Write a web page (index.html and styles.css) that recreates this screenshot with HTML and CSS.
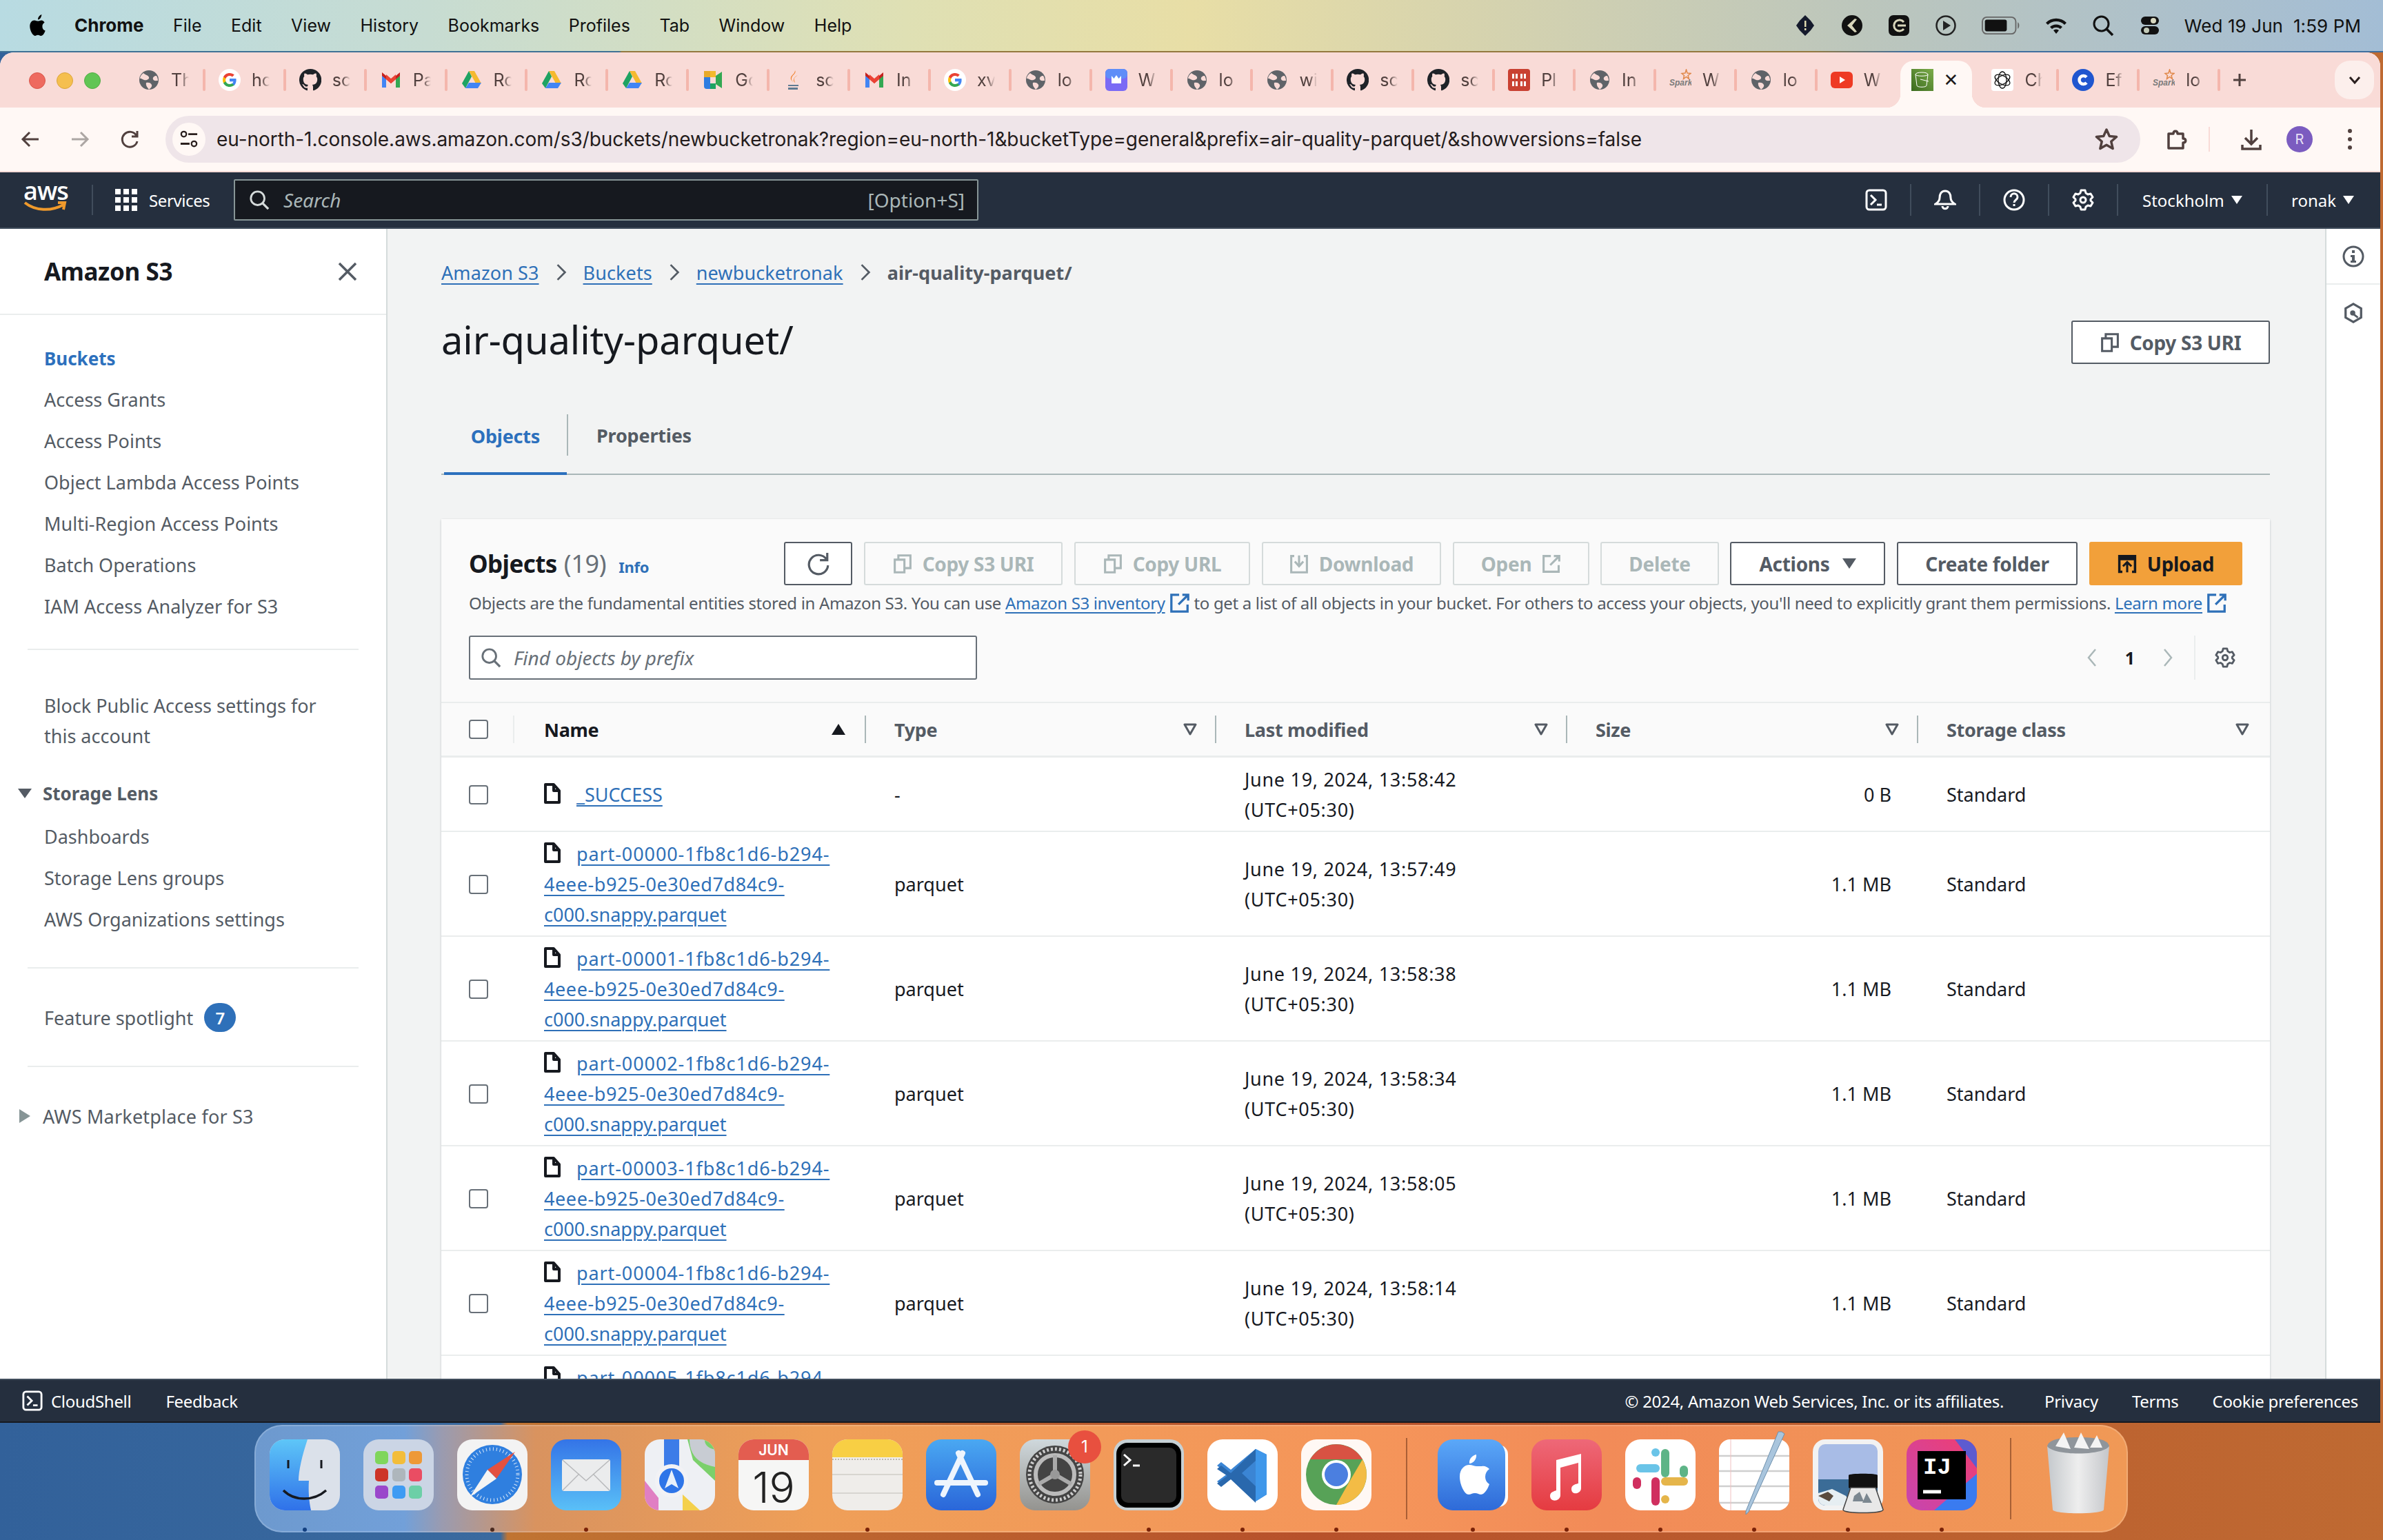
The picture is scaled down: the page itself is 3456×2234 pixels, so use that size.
FILE: index.html
```html
<!DOCTYPE html>
<html lang="en">
<head>
<meta charset="utf-8">
<title>air-quality-parquet/ - S3 bucket</title>
<link rel="stylesheet" href="styles.css">
</head>
<body>
<svg class="defs" width="0" height="0">
  <defs>
    <symbol id="globe" viewBox="0 0 32 32"><circle cx="16" cy="16" r="14" fill="#5f6368"/><path d="M8 6c3 3 7 3 8 6s-4 5-7 4-5-3-6-2c0-3 2-6 5-8zM27 10c-3 0-6 2-5 5s5 2 7 2c0-3-1-5-2-7zM12 20c3-1 7 0 8 3s-2 5-4 7c-2-3-5-6-4-10z" fill="#fadbd7"/></symbol>
    <symbol id="goog" viewBox="0 0 32 32"><circle cx="16" cy="16" r="16" fill="#fff"/><path d="M25.6 16.3c0-.8-.1-1.500-.2-2.200H16v4.100h5.400c-.2 1.300-1 2.400-2 3.100v2.600h3.300c1.900-1.800 2.900-4.400 2.900-7.600z" fill="#4285f4"/><path d="M16 26c2.700 0 5-.9 6.700-2.400l-3.300-2.600c-.9.600-2 1-3.400 1-2.600 0-4.800-1.800-5.600-4.100H7v2.600C8.600 23.800 12 26 16 26z" fill="#34a853"/><path d="M10.400 17.900c-.4-1.200-.4-2.600 0-3.800v-2.600H7c-1.300 2.800-1.300 6.200 0 9z" fill="#fbbc05"/><path d="M16 10c1.500 0 2.800.5 3.900 1.500l2.900-2.900C21 6.900 18.700 6 16 6c-4 0-7.400 2.200-9 5.500l3.400 2.600C11.200 11.800 13.400 10 16 10z" fill="#ea4335"/></symbol>
    <symbol id="gh" viewBox="0 0 16 16"><path fill="#1f2328" d="M8 0a8 8 0 0 0-2.500 15.600c.4.100.5-.2.500-.4v-1.400c-2.200.5-2.700-1-2.700-1-.4-.9-.9-1.200-.9-1.200-.7-.5.100-.5.100-.5.800.1 1.200.8 1.200.8.700 1.200 1.900.9 2.300.7.100-.5.300-.9.500-1.100-1.800-.2-3.600-.9-3.600-4 0-.9.300-1.600.8-2.100-.1-.2-.4-1 .1-2.100 0 0 .7-.2 2.200.8a7.600 7.600 0 0 1 4 0c1.500-1 2.200-.8 2.200-.8.500 1.100.2 1.900.1 2.100.5.600.8 1.300.8 2.100 0 3.100-1.900 3.800-3.700 4 .3.300.6.800.6 1.500v2.200c0 .2.100.5.600.4A8 8 0 0 0 8 0z"/></symbol>
    <symbol id="gmail" viewBox="0 0 32 32"><path d="M3 8v19h6V15z" fill="#4285f4"/><path d="M23 15v12h6V8z" fill="#34a853"/><path d="M3 8l13 11L29 8l-6 7-7 6-7-6z" fill="#ea4335"/><path d="M3 5l6 5v5L3 10zM29 5l-6 5v5l6-5z" fill="#c5221f"/><path d="M9 8l7 6 7-6v7l-7 6-7-6z" fill="#ea4335"/></symbol>
    <symbol id="drive" viewBox="0 0 32 32"><path d="M12 3h8l10 18h-8z" fill="#f5b92e"/><path d="M12 3l4 8-9 17-5-7z" fill="#1ea362"/><path d="M7 28l5-8h18l-5 8z" fill="#4285f4"/></symbol>
    <symbol id="meet" viewBox="0 0 32 32"><path d="M3 3h17v9H12v9H3z" fill="#f5b92e"/><path d="M3 12h9v17H7a4 4 0 0 1-4-4z" fill="#2f7de1"/><path d="M12 21h8v8h-8z" fill="#1ea362"/><path d="M20 10l9-6v24l-9-6z" fill="#34a853"/><path d="M3 3h9v9H3z" fill="#e7a92a"/></symbol>
    <symbol id="java" viewBox="0 0 32 32"><path d="M18 2c3 5-6 7-5 13 0 2 2 3 2 4-3-3-5-6-1-10 2-2 4-4 4-7zM22 9c-4 3-6 4-5 8 0 1 1 2 1 3-2-2-3-4-1-7 1-2 3-3 5-4z" fill="#f0812d"/><path d="M8 23h15v2H8zM8 27h14v3H8z" fill="#5f7a92"/></symbol>
    <symbol id="crown" viewBox="0 0 32 32"><rect width="32" height="32" rx="6" fill="#7a6af5"/><rect width="32" height="14" rx="6" fill="#5f8df8"/><path d="M9 10l3.500 4L16 9l3.500 5L23 10v11H9z" fill="#fff"/></symbol>
    <symbol id="redgrid" viewBox="0 0 32 32"><rect width="32" height="32" rx="4" fill="#c94132"/><path d="M6 7h8v7H6zM18 7h8v7h-8zM6 18h8v7H6zM18 18h8v7h-8z" fill="#fff"/><path d="M10 7v7M22 7v7M10 18v7M22 18v7" stroke="#c94132" stroke-width="2"/></symbol>
    <symbol id="spark" viewBox="0 0 32 32"><path d="M23 6l1.500-5 1.500 5 5 .5-4 3 1.500 5-4-3-4 3 1-5-3.500-3z" fill="none" stroke="#e0884a" stroke-width="1.500"/><text x="0" y="24" font-family="Liberation Sans" font-style="italic" font-weight="700" font-size="12" fill="#7b7b7b">Spark</text></symbol>
    <symbol id="yt" viewBox="0 0 32 32"><rect y="4" width="32" height="24" rx="6" fill="#ee3a24"/><path d="M13 11l8 5-8 5z" fill="#fff"/></symbol>
    <symbol id="s3" viewBox="0 0 32 32"><defs><linearGradient id="s3g" x1="0" y1="1" x2="1" y2="0"><stop offset="0" stop-color="#3a6a1e"/><stop offset="1" stop-color="#7cac4a"/></linearGradient></defs><rect width="32" height="32" fill="url(#s3g)"/><path d="M6 8c0-4 18-4 18 0l-2 16c0 3-14 3-14 0zM6 8c0 3 18 3 18 0M13 15l12 3" fill="none" stroke="#fff" stroke-width="1"/></symbol>
    <symbol id="openai" viewBox="0 0 32 32"><rect width="32" height="32" rx="4" fill="#fff"/><g fill="none" stroke="#111" stroke-width="1.300"><ellipse cx="16" cy="16" rx="6" ry="12"/><ellipse cx="16" cy="16" rx="6" ry="12" transform="rotate(60 16 16)"/><ellipse cx="16" cy="16" rx="6" ry="12" transform="rotate(120 16 16)"/></g></symbol>
    <symbol id="coursera" viewBox="0 0 32 32"><circle cx="16" cy="16" r="16" fill="#2056cf"/><path d="M21 12a6 6 0 1 0 0 8" fill="none" stroke="#fff" stroke-width="4.500"/></symbol>

    <symbol id="i-file" viewBox="0 0 24 30"><path d="M2 2h12l8 9v17H2zM14 2v9h8" fill="none" stroke="#16191f" stroke-width="4" stroke-linejoin="round"/></symbol>
    <symbol id="i-copy" viewBox="0 0 32 32"><path d="M3 9h16v21H3zM9 9V2h20v21h-10" fill="none" stroke="currentColor" stroke-width="3.500"/></symbol>
    <symbol id="i-ext" viewBox="0 0 32 32"><path d="M28 18v11H3V3h12M20 3h9v9M29 3L14 18" fill="none" stroke="currentColor" stroke-width="3.500"/></symbol>
    <symbol id="i-gear" viewBox="0 0 32 32"><path d="M13 2h6l1 4 3 2 4-1 3 5-3 3v2l3 3-3 5-4-1-3 2-1 4h-6l-1-4-3-2-4 1-3-5 3-3v-2l-3-3 3-5 4 1 3-2z" fill="none" stroke="currentColor" stroke-width="3" stroke-linejoin="round"/><circle cx="16" cy="16" r="4" fill="none" stroke="currentColor" stroke-width="3"/></symbol>
    <symbol id="i-search" viewBox="0 0 32 32"><circle cx="13.500" cy="13.500" r="10.500" fill="none" stroke="currentColor" stroke-width="3"/><path d="M21 21l9 9" stroke="currentColor" stroke-width="3.500"/></symbol>
    <symbol id="i-filter" viewBox="0 0 20 18"><path d="M2 2h16l-8 14z" fill="none" stroke="currentColor" stroke-width="3" stroke-linejoin="round"/></symbol>
  </defs>
</svg>

<header class="menubar">
  <div class="menu-left">
    <svg class="apple" viewBox="0 0 24 30"><path d="M17 8c-2 0-3 1-5 1S9 8 7 8c-3 0-6 3-6 8 0 6 4 13 7 13 2 0 2-1 4-1s2 1 4 1c3 0 5-4 6-7-3-1-4-3-4-6 0-2 1-4 3-5-1-2-3-3-4-3zM12 7c0-3 2-6 5-7 0 3-2 7-5 7z" fill="#000"/></svg>
    <strong class="menu-item">Chrome</strong>
    <span class="menu-item">File</span>
    <span class="menu-item">Edit</span>
    <span class="menu-item">View</span>
    <span class="menu-item">History</span>
    <span class="menu-item">Bookmarks</span>
    <span class="menu-item">Profiles</span>
    <span class="menu-item">Tab</span>
    <span class="menu-item">Window</span>
    <span class="menu-item">Help</span>
  </div>
  <div class="menu-right">
    <svg class="st" viewBox="0 0 32 32"><path d="M16 1l8 8 5 7-5 7-8 8-8-8-5-7 5-7z" fill="#151a2c"/><path d="M15 9h2.500v9H15zM15 20h2.500v3H15z" fill="#e0d9b0"/></svg>
    <svg class="st" viewBox="0 0 32 32"><circle cx="16" cy="16" r="15" fill="#111"/><path d="M20 6L9 16l11 10 3-1-7-9 7-9z" fill="#d8d5ba"/></svg>
    <svg class="st" viewBox="0 0 32 32"><rect x="1" y="1" width="30" height="30" rx="7" fill="#111"/><path d="M23 11a8 8 0 1 0 0 10M14 16h12" fill="none" stroke="#d8d5ba" stroke-width="3"/></svg>
    <svg class="st" viewBox="0 0 32 32"><circle cx="16" cy="16" r="13.500" fill="none" stroke="#222" stroke-width="2.500"/><path d="M12 9l11 7-11 7z" fill="#222"/></svg>
    <svg class="st st-batt" viewBox="0 0 60 28"><rect x="1" y="1" width="52" height="26" rx="7" fill="none" stroke="#666" stroke-width="2"/><rect x="5" y="5" width="34" height="18" rx="3" fill="#111"/><path d="M56 9c3 1 3 9 0 10z" fill="#666"/></svg>
    <svg class="st" viewBox="0 0 32 32"><path d="M1 12a21 21 0 0 1 30 0l-3 3a17 17 0 0 0-24 0zM7 18a13 13 0 0 1 18 0l-3 3a9 9 0 0 0-12 0zM12 23a6 6 0 0 1 8 0l-4 5z" fill="#111"/></svg>
    <svg class="st st-q" viewBox="0 0 32 32"><use href="#i-search"/></svg>
    <svg class="st" viewBox="0 0 32 32"><rect x="3" y="3" width="26" height="12" rx="6" fill="#111"/><circle cx="21" cy="9" r="4" fill="#d8d8c0"/><rect x="3" y="17" width="26" height="12" rx="6" fill="#111"/><circle cx="11" cy="23" r="4" fill="#c2cab8"/></svg>
    <span class="clock">Wed 19 Jun&nbsp;&nbsp;1:59 PM</span>
  </div>
</header>

<div class="window">
  <div class="tabstrip">
    <div class="lights"><i class="light red"></i><i class="light yellow"></i><i class="light green"></i></div>
    <div class="tab"><svg class="fav"><use href="#globe"/></svg><span class="tab-label">Th</span><i class="tab-sep"></i></div>
    <div class="tab"><svg class="fav"><use href="#goog"/></svg><span class="tab-label">ho</span><i class="tab-sep"></i></div>
    <div class="tab"><svg class="fav"><use href="#gh"/></svg><span class="tab-label">sc</span><i class="tab-sep"></i></div>
    <div class="tab"><svg class="fav"><use href="#gmail"/></svg><span class="tab-label">Pa</span><i class="tab-sep"></i></div>
    <div class="tab"><svg class="fav"><use href="#drive"/></svg><span class="tab-label">Rc</span><i class="tab-sep"></i></div>
    <div class="tab"><svg class="fav"><use href="#drive"/></svg><span class="tab-label">Rc</span><i class="tab-sep"></i></div>
    <div class="tab"><svg class="fav"><use href="#drive"/></svg><span class="tab-label">Rc</span><i class="tab-sep"></i></div>
    <div class="tab"><svg class="fav"><use href="#meet"/></svg><span class="tab-label">Gc</span><i class="tab-sep"></i></div>
    <div class="tab"><svg class="fav"><use href="#java"/></svg><span class="tab-label">sc</span><i class="tab-sep"></i></div>
    <div class="tab"><svg class="fav"><use href="#gmail"/></svg><span class="tab-label">In</span><i class="tab-sep"></i></div>
    <div class="tab"><svg class="fav"><use href="#goog"/></svg><span class="tab-label">xv</span><i class="tab-sep"></i></div>
    <div class="tab"><svg class="fav"><use href="#globe"/></svg><span class="tab-label">lo</span><i class="tab-sep"></i></div>
    <div class="tab"><svg class="fav"><use href="#crown"/></svg><span class="tab-label">W</span><i class="tab-sep"></i></div>
    <div class="tab"><svg class="fav"><use href="#globe"/></svg><span class="tab-label">lo</span><i class="tab-sep"></i></div>
    <div class="tab"><svg class="fav"><use href="#globe"/></svg><span class="tab-label">wi</span><i class="tab-sep"></i></div>
    <div class="tab"><svg class="fav"><use href="#gh"/></svg><span class="tab-label">sc</span><i class="tab-sep"></i></div>
    <div class="tab"><svg class="fav"><use href="#gh"/></svg><span class="tab-label">sc</span><i class="tab-sep"></i></div>
    <div class="tab"><svg class="fav"><use href="#redgrid"/></svg><span class="tab-label">Pl</span><i class="tab-sep"></i></div>
    <div class="tab"><svg class="fav"><use href="#globe"/></svg><span class="tab-label">In</span><i class="tab-sep"></i></div>
    <div class="tab"><svg class="fav"><use href="#spark"/></svg><span class="tab-label">W</span><i class="tab-sep"></i></div>
    <div class="tab"><svg class="fav"><use href="#globe"/></svg><span class="tab-label">lo</span><i class="tab-sep"></i></div>
    <div class="tab"><svg class="fav"><use href="#yt"/></svg><span class="tab-label">W</span></div>
    <div class="tab tab-active"><svg class="fav"><use href="#s3"/></svg><span class="tab-close">✕</span></div>
    <div class="tab tab-after"><svg class="fav"><use href="#openai"/></svg><span class="tab-label">Ch</span><i class="tab-sep"></i></div>
    <div class="tab"><svg class="fav"><use href="#coursera"/></svg><span class="tab-label">Ef</span><i class="tab-sep"></i></div>
    <div class="tab"><svg class="fav"><use href="#spark"/></svg><span class="tab-label">lo</span><i class="tab-sep"></i></div>
    <svg class="tab-plus" viewBox="0 0 24 24"><path d="M12 3v18M3 12h18" stroke="#51403e" stroke-width="3"/></svg>
    <div class="tab-chev"><svg viewBox="0 0 24 24" width="24" height="24"><path d="M5 8l7 8 7-8" fill="none" stroke="#2a1f1e" stroke-width="3"/></svg></div>
  </div>
  <div class="toolbar">
    <svg class="tb-ico" viewBox="0 0 28 28"><path d="M26 14H4M13 4L3 14l10 10" fill="none" stroke="#51403e" stroke-width="3"/></svg>
    <svg class="tb-ico" viewBox="0 0 28 28"><path d="M2 14h22M15 4l10 10-10 10" fill="none" stroke="#aca6a3" stroke-width="3"/></svg>
    <svg class="tb-ico" viewBox="0 0 28 28"><path d="M24 9a11 11 0 1 0 1 8M25 2v8h-8" fill="none" stroke="#51403e" stroke-width="3"/></svg>
    <div class="omni">
      <span class="omni-chip"><svg viewBox="0 0 28 28" width="26" height="26"><circle cx="6" cy="6" r="4" fill="none" stroke="#2a1f1e" stroke-width="2.500"/><path d="M13 6h14M1 21h14" stroke="#2a1f1e" stroke-width="3"/><circle cx="22" cy="21" r="4" fill="none" stroke="#2a1f1e" stroke-width="2.500"/></svg></span>
      <span class="omni-url">eu-north-1.console.aws.amazon.com/s3/buckets/newbucketronak?region=eu-north-1&amp;bucketType=general&amp;prefix=air-quality-parquet/&amp;showversions=false</span>
      <svg class="omni-star" viewBox="0 0 34 34"><path d="M17 3l4.300 9.500 10.200 1-7.700 6.800 2.300 10.200L17 25.200 7.900 30.500l2.300-10.200L2.500 13.500l10.200-1z" fill="none" stroke="#51403e" stroke-width="3.500" stroke-linejoin="round"/></svg>
    </div>
    <svg class="tb-ext" viewBox="0 0 32 32"><path d="M4 8h7c0-5 6-5 6 0h8v7c5 0 5 6 0 6v8H4z" fill="none" stroke="#51403e" stroke-width="3.500" stroke-linejoin="round"/></svg>
    <i class="tb-sep"></i>
    <svg class="tb-dl" viewBox="0 0 32 32"><path d="M16 2v20M7 14l9 9 9-9M3 24v6h26v-6" fill="none" stroke="#51403e" stroke-width="3.500"/></svg>
    <span class="avatar">R</span>
    <svg class="tb-dots" viewBox="0 0 8 32"><circle cx="4" cy="4" r="3" fill="#51403e"/><circle cx="4" cy="16" r="3" fill="#51403e"/><circle cx="4" cy="28" r="3" fill="#51403e"/></svg>
  </div>

  <nav class="awsbar">
    <span class="aws-logo"><span class="aws-word">aws</span><svg viewBox="0 0 64 18" width="64" height="18"><path d="M2 3c15 12 38 13 56 3M50 3l10 0-2 10" fill="none" stroke="#f09a2c" stroke-width="4"/></svg></span>
    <i class="aws-sep aws-sep-logo"></i>
    <svg class="aws-grid" viewBox="0 0 32 32"><path d="M0 0h8v8H0zM12 0h8v8h-8zM24 0h8v8h-8zM0 12h8v8H0zM12 12h8v8h-8zM24 12h8v8h-8zM0 24h8v8H0zM12 24h8v8h-8zM24 24h8v8h-8z" fill="#fff"/></svg>
    <span class="aws-services">Services</span>
    <div class="aws-search">
      <svg class="aws-search-ico" viewBox="0 0 32 32"><use href="#i-search"/></svg>
      <span class="aws-search-ph">Search</span>
      <span class="aws-search-key">[Option+S]</span>
    </div>
    <div class="aws-right">
      <span class="aws-ic"><svg viewBox="0 0 32 32" width="32" height="32"><rect x="2" y="2" width="28" height="28" rx="4" fill="none" stroke="#fff" stroke-width="3"/><path d="M8 9l7 7-7 7M17 23h7" fill="none" stroke="#fff" stroke-width="3"/></svg></span>
      <span class="aws-ic"><svg viewBox="0 0 32 32" width="32" height="32"><path d="M16 3c-6 0-8 5-8 10 0 4-3 7-6 9h28c-3-2-6-5-6-9 0-5-2-10-8-10zM12 25c0 5 8 5 8 0" fill="none" stroke="#fff" stroke-width="3"/></svg></span>
      <span class="aws-ic"><svg viewBox="0 0 32 32" width="32" height="32"><circle cx="16" cy="16" r="14" fill="none" stroke="#fff" stroke-width="3"/><path d="M11 12c0-7 10-7 10 0 0 4-5 4-5 8" fill="none" stroke="#fff" stroke-width="3"/><path d="M14.500 22h3v3h-3z" fill="#fff"/></svg></span>
      <span class="aws-ic aws-gear"><svg width="32" height="32"><use href="#i-gear"/></svg></span>
      <span class="aws-menu aws-region">Stockholm <i class="caret"></i></span>
      <span class="aws-menu aws-user">ronak <i class="caret"></i></span>
    </div>
  </nav>

  <div class="main">
    <aside class="side">
      <div class="side-head">
        <span class="side-title">Amazon S3</span>
        <svg class="side-close" viewBox="0 0 28 28"><path d="M2 2l24 24M26 2L2 26" stroke="#545b64" stroke-width="3.500"/></svg>
      </div>
      <ul class="side-list side-first">
        <li class="side-link side-active">Buckets</li>
        <li class="side-link">Access Grants</li>
        <li class="side-link">Access Points</li>
        <li class="side-link">Object Lambda Access Points</li>
        <li class="side-link">Multi-Region Access Points</li>
        <li class="side-link">Batch Operations</li>
        <li class="side-link">IAM Access Analyzer for S3</li>
      </ul>
      <hr class="side-hr side-hr-1">
      <p class="side-block">Block Public Access settings for<br>this account</p>
      <div class="side-group"><i class="tri-down"></i>Storage Lens</div>
      <ul class="side-list side-sub">
        <li class="side-link">Dashboards</li>
        <li class="side-link">Storage Lens groups</li>
        <li class="side-link">AWS Organizations settings</li>
      </ul>
      <hr class="side-hr side-hr-2">
      <div class="side-feature">Feature spotlight<span class="badge">7</span></div>
      <hr class="side-hr side-hr-3">
      <div class="side-market"><i class="tri-right"></i>AWS Marketplace for S3</div>
    </aside>

    <main class="content">
      <div class="crumbs">
        <a class="link">Amazon S3</a><svg class="crumb-ch" viewBox="0 0 14 24"><path d="M2 2l10 10L2 22" fill="none" stroke="#545b64" stroke-width="2.500"/></svg>
        <a class="link">Buckets</a><svg class="crumb-ch" viewBox="0 0 14 24"><path d="M2 2l10 10L2 22" fill="none" stroke="#545b64" stroke-width="2.500"/></svg>
        <a class="link">newbucketronak</a><svg class="crumb-ch" viewBox="0 0 14 24"><path d="M2 2l10 10L2 22" fill="none" stroke="#545b64" stroke-width="2.500"/></svg>
        <span class="crumb-cur">air-quality-parquet/</span>
      </div>
      <div class="page-head">
        <h1 class="page-title">air-quality-parquet/</h1>
        <button class="btn btn-top"><svg class="btn-ico"><use href="#i-copy"/></svg>Copy S3 URI</button>
      </div>
      <div class="tabs">
        <span class="ctab ctab-on">Objects</span><i class="ctab-sep"></i><span class="ctab">Properties</span>
      </div>

      <section class="card">
        <div class="card-top">
          <div class="card-h"><span class="card-name">Objects</span><span class="card-count">(19)</span><span class="card-info">Info</span></div>
          <div class="card-btns">
            <button class="btn btn-refresh"><svg viewBox="0 0 32 32" width="34" height="34"><path d="M27 10a13 13 0 1 0 2 8M28 1v10H18" fill="none" stroke="#545b64" stroke-width="3"/></svg></button>
            <button class="btn btn-off b-uri"><svg class="btn-ico"><use href="#i-copy"/></svg>Copy S3 URI</button>
            <button class="btn btn-off b-url"><svg class="btn-ico"><use href="#i-copy"/></svg>Copy URL</button>
            <button class="btn btn-off b-dl"><svg class="btn-ico" viewBox="0 0 32 32"><path d="M8 3H3v27h26V3h-5M16 2v17M9 12l7 8 7-8" fill="none" stroke="currentColor" stroke-width="3.500"/></svg>Download</button>
            <button class="btn btn-off b-open">Open<svg class="btn-ico btn-ico-r"><use href="#i-ext"/></svg></button>
            <button class="btn btn-off b-del">Delete</button>
            <button class="btn b-act">Actions<i class="caret caret-dark"></i></button>
            <button class="btn b-new">Create folder</button>
            <button class="btn b-up"><svg class="btn-ico" viewBox="0 0 32 32"><path d="M8 29H3V3h26v26h-5" fill="none" stroke="#16191f" stroke-width="4"/><path d="M3 3h26v7H3z" fill="#16191f"/><path d="M16 30V14M9 20l7-7 7 7" fill="none" stroke="#16191f" stroke-width="3.500"/></svg>Upload</button>
          </div>
        </div>
        <p class="card-desc">Objects are the fundamental entities stored in Amazon S3. You can use <a class="link link-s">Amazon S3 inventory</a><svg class="ext"><use href="#i-ext"/></svg> to get a list of all objects in your bucket. For others to access your objects, you'll need to explicitly grant them permissions. <a class="link link-s">Learn more</a><svg class="ext"><use href="#i-ext"/></svg></p>
        <div class="card-filter">
          <div class="finder"><svg class="finder-ico"><use href="#i-search"/></svg><span class="finder-ph">Find objects by prefix</span></div>
          <div class="pager">
            <svg class="pg-ch" viewBox="0 0 14 28"><path d="M12 2L2 14l10 12" fill="none" stroke="#aab7b8" stroke-width="2.500"/></svg>
            <strong class="pg-num">1</strong>
            <svg class="pg-ch" viewBox="0 0 14 28"><path d="M2 2l10 12L2 26" fill="none" stroke="#aab7b8" stroke-width="2.500"/></svg>
            <i class="pg-sep"></i>
            <svg class="pg-gear"><use href="#i-gear"/></svg>
          </div>
        </div>
        <div class="grid-head">
          <div class="cell-chk"><i class="chk"></i></div>
          <div class="th th-name th-dark">Name<i class="sort-up"></i></div>
          <div class="th">Type<svg class="flt"><use href="#i-filter"/></svg></div>
          <div class="th">Last modified<svg class="flt"><use href="#i-filter"/></svg></div>
          <div class="th">Size<svg class="flt"><use href="#i-filter"/></svg></div>
          <div class="th th-last">Storage class<svg class="flt"><use href="#i-filter"/></svg></div>
        </div>
        <div class="row row-short">
          <div class="cell-chk"><i class="chk"></i></div>
          <div class="td td-name"><svg class="file"><use href="#i-file"/></svg><a class="link">_SUCCESS</a></div>
          <div class="td">-</div>
          <div class="td td-date">June 19, 2024, 13:58:42<br>(UTC+05:30)</div>
          <div class="td td-size">0 B</div>
          <div class="td">Standard</div>
        </div>
        <div class="row">
          <div class="cell-chk"><i class="chk"></i></div>
          <div class="td td-name"><svg class="file"><use href="#i-file"/></svg><a class="link"><span class="ln">part-00000-1fb8c1d6-b294-</span><br><span class="ln">4eee-b925-0e30ed7d84c9-</span><br>c000.snappy.parquet</a></div>
          <div class="td">parquet</div>
          <div class="td td-date">June 19, 2024, 13:57:49<br>(UTC+05:30)</div>
          <div class="td td-size">1.1 MB</div>
          <div class="td">Standard</div>
        </div>
        <div class="row">
          <div class="cell-chk"><i class="chk"></i></div>
          <div class="td td-name"><svg class="file"><use href="#i-file"/></svg><a class="link"><span class="ln">part-00001-1fb8c1d6-b294-</span><br><span class="ln">4eee-b925-0e30ed7d84c9-</span><br>c000.snappy.parquet</a></div>
          <div class="td">parquet</div>
          <div class="td td-date">June 19, 2024, 13:58:38<br>(UTC+05:30)</div>
          <div class="td td-size">1.1 MB</div>
          <div class="td">Standard</div>
        </div>
        <div class="row">
          <div class="cell-chk"><i class="chk"></i></div>
          <div class="td td-name"><svg class="file"><use href="#i-file"/></svg><a class="link"><span class="ln">part-00002-1fb8c1d6-b294-</span><br><span class="ln">4eee-b925-0e30ed7d84c9-</span><br>c000.snappy.parquet</a></div>
          <div class="td">parquet</div>
          <div class="td td-date">June 19, 2024, 13:58:34<br>(UTC+05:30)</div>
          <div class="td td-size">1.1 MB</div>
          <div class="td">Standard</div>
        </div>
        <div class="row">
          <div class="cell-chk"><i class="chk"></i></div>
          <div class="td td-name"><svg class="file"><use href="#i-file"/></svg><a class="link"><span class="ln">part-00003-1fb8c1d6-b294-</span><br><span class="ln">4eee-b925-0e30ed7d84c9-</span><br>c000.snappy.parquet</a></div>
          <div class="td">parquet</div>
          <div class="td td-date">June 19, 2024, 13:58:05<br>(UTC+05:30)</div>
          <div class="td td-size">1.1 MB</div>
          <div class="td">Standard</div>
        </div>
        <div class="row">
          <div class="cell-chk"><i class="chk"></i></div>
          <div class="td td-name"><svg class="file"><use href="#i-file"/></svg><a class="link"><span class="ln">part-00004-1fb8c1d6-b294-</span><br><span class="ln">4eee-b925-0e30ed7d84c9-</span><br>c000.snappy.parquet</a></div>
          <div class="td">parquet</div>
          <div class="td td-date">June 19, 2024, 13:58:14<br>(UTC+05:30)</div>
          <div class="td td-size">1.1 MB</div>
          <div class="td">Standard</div>
        </div>
        <div class="row">
          <div class="cell-chk"></div>
          <div class="td td-name"><svg class="file"><use href="#i-file"/></svg><a class="link"><span class="ln">part-00005-1fb8c1d6-b294-</span><br><span class="ln">4eee-b925-0e30ed7d84c9-</span><br>c000.snappy.parquet</a></div>
          <div class="td"></div><div class="td"></div><div class="td"></div><div class="td"></div>
        </div>
      </section>
    </main>

    <aside class="rail">
      <div class="rail-cell"><svg viewBox="0 0 32 32" width="32" height="32"><circle cx="16" cy="16" r="14" fill="none" stroke="#545b64" stroke-width="3"/><path d="M14 7h4v4h-4zM12 14h6v8h2v3h-8v-3h2v-5h-2z" fill="#545b64"/></svg></div>
      <div class="rail-cell"><svg viewBox="0 0 32 32" width="30" height="32"><path d="M16 2l12 7v14l-12 7-12-7V9z" fill="none" stroke="#545b64" stroke-width="3.500"/><circle cx="15" cy="16" r="4" fill="#545b64"/><path d="M15 17l8 6" stroke="#545b64" stroke-width="3"/></svg></div>
    </aside>
  </div>

  <footer class="foot">
    <div class="foot-left">
      <svg viewBox="0 0 32 32" width="30" height="30"><rect x="2" y="2" width="28" height="28" rx="4" fill="none" stroke="#fff" stroke-width="3"/><path d="M8 9l7 7-7 7M17 23h7" fill="none" stroke="#fff" stroke-width="3"/></svg>
      <span class="foot-cs">CloudShell</span><span class="foot-fb">Feedback</span>
    </div>
    <div class="foot-right">
      <span class="foot-copy">© 2024, Amazon Web Services, Inc. or its affiliates.</span><span>Privacy</span><span>Terms</span><span>Cookie preferences</span>
    </div>
  </footer>
</div>

<div class="dock">
  <div class="dk"><svg class="dk-i" viewBox="0 0 102 103"><defs><linearGradient id="fa" x1="0" y1="0" x2="0" y2="1"><stop offset="0" stop-color="#5ec6f8"/><stop offset="1" stop-color="#2f71e9"/></linearGradient></defs><rect width="102" height="103" rx="22" fill="#dbe1ea"/><path d="M22 0h33c-8 24-13 46-13 60h15c-1 14 0 30 3 43H22A22 22 0 0 1 0 81V22A22 22 0 0 1 22 0z" fill="url(#fa)"/><path d="M27 30v12M75 30v12" stroke="#16191f" stroke-width="3"/><path d="M20 74c16 16 44 16 62 0" fill="none" stroke="#16191f" stroke-width="3.500"/></svg><i class="dot dot-blue"></i></div>
  <div class="dk"><svg class="dk-i" viewBox="0 0 102 103"><rect width="102" height="103" rx="22" fill="#cbd5e5"/><rect x="17" y="17" width="19" height="19" rx="5" fill="#7fd65c"/><rect x="42" y="17" width="19" height="19" rx="5" fill="#f3bd3a"/><rect x="66" y="17" width="19" height="19" rx="5" fill="#ee9937"/><rect x="17" y="42" width="19" height="19" rx="5" fill="#cd3428"/><rect x="42" y="42" width="19" height="19" rx="5" fill="#aeb6bc"/><rect x="66" y="42" width="19" height="19" rx="5" fill="#ea4d63"/><rect x="17" y="67" width="19" height="19" rx="5" fill="#9a47cb"/><rect x="42" y="67" width="19" height="19" rx="5" fill="#3e9bf3"/><rect x="66" y="67" width="19" height="19" rx="5" fill="#6ccfa7"/></svg></div>
  <div class="dk"><svg class="dk-i" viewBox="0 0 102 103"><rect width="102" height="103" rx="22" fill="#f3f3f3"/><circle cx="51" cy="51" r="43" fill="#2f7fdf"/><circle cx="51" cy="51" r="37" fill="none" stroke="#dbe8f7" stroke-width="5" stroke-dasharray="1 4"/><path d="M84 18L44 44l13 13z" fill="#e35140"/><path d="M18 84l26-40 13 13z" fill="#f4f4f4"/></svg><i class="dot dot-dark"></i></div>
  <div class="dk"><svg class="dk-i" viewBox="0 0 102 103"><defs><linearGradient id="ma" x1="0" y1="0" x2="0" y2="1"><stop offset="0" stop-color="#3474e7"/><stop offset="1" stop-color="#5ac0f7"/></linearGradient></defs><rect width="102" height="103" rx="22" fill="url(#ma)"/><rect x="16" y="29" width="70" height="46" rx="3" fill="#ebeced"/><path d="M17 30l34 30 34-30M17 74l24-24M85 74L61 50" fill="none" stroke="#b8b9bb" stroke-width="1.500"/></svg><i class="dot dot-brown"></i></div>
  <div class="dk"><svg class="dk-i" viewBox="0 0 102 103"><clipPath id="mc"><rect width="102" height="103" rx="22"/></clipPath><g clip-path="url(#mc)"><rect width="102" height="103" fill="#eef0f4"/><path d="M0 0h102v60L70 30 62 0z" fill="#7bd06b"/><path d="M0 60l20 25v18H0z" fill="#e07fc3"/><path d="M55 80l25 23H55z" fill="#f4d04b"/><path d="M28 0h22v50H28z" fill="#3c7ce8"/><path d="M65 0c0 20 10 35 37 40v-25c-12-3-15-8-15-15z" fill="#c8ccd3"/><path d="M28 80h22v23H28z" fill="#eef0f4"/><circle cx="39" cy="60" r="24" fill="#f2f2f5"/><circle cx="39" cy="60" r="18" fill="#2e75e8"/><path d="M39 44l10 27-10-6-10 6z" fill="#e7f0fb"/></g></svg></div>
  <div class="dk"><svg class="dk-i" viewBox="0 0 102 103"><clipPath id="cc"><rect width="102" height="103" rx="22"/></clipPath><g clip-path="url(#cc)"><rect width="102" height="103" fill="#f6f6f5"/><rect width="102" height="30" fill="#e35d50"/><text x="51" y="23" class="cal-m" text-anchor="middle">JUN</text><text x="51" y="92" class="cal-d" text-anchor="middle">19</text></g></svg></div>
  <div class="dk"><svg class="dk-i" viewBox="0 0 102 103"><clipPath id="nc"><rect width="102" height="103" rx="22"/></clipPath><g clip-path="url(#nc)"><rect width="102" height="103" fill="#efedea"/><rect width="102" height="26" fill="#f8cf44"/><path d="M0 29h102" stroke="#bdb7ac" stroke-width="2" stroke-dasharray="2 2"/><path d="M0 51h102M0 78h102" stroke="#d0cdc8" stroke-width="1.500"/></g></svg><i class="dot dot-brown"></i></div>
  <div class="dk"><svg class="dk-i" viewBox="0 0 102 103"><defs><linearGradient id="ap" x1="0" y1="0" x2="0" y2="1"><stop offset="0" stop-color="#4aa8f2"/><stop offset="1" stop-color="#2a66d9"/></linearGradient></defs><rect width="102" height="103" rx="22" fill="url(#ap)"/><path d="M47 20l28 60M53 20L25 80" stroke="#eef5fd" stroke-width="8" stroke-linecap="round"/><path d="M16 63h70" stroke="#eef5fd" stroke-width="8" stroke-linecap="round"/></svg></div>
  <div class="dk dk-set"><svg class="dk-i" viewBox="0 0 102 103"><defs><linearGradient id="se" x1="0" y1="0" x2="0" y2="1"><stop offset="0" stop-color="#cfd8dc"/><stop offset="1" stop-color="#94938f"/></linearGradient></defs><rect width="102" height="103" rx="22" fill="url(#se)"/><circle cx="51" cy="51" r="42" fill="#444"/><circle cx="51" cy="51" r="37" fill="none" stroke="#ccc" stroke-width="5" stroke-dasharray="3 3"/><circle cx="51" cy="51" r="28" fill="none" stroke="#bbb" stroke-width="6"/><path d="M51 51V23M51 51l24 14M51 51L27 65" stroke="#aaa" stroke-width="6"/><circle cx="51" cy="51" r="7" fill="#999"/></svg><span class="dk-badge">1</span></div>
  <div class="dk"><svg class="dk-i" viewBox="0 0 102 103"><rect width="102" height="103" rx="20" fill="#c6d0d4"/><rect x="4" y="5" width="94" height="94" rx="16" fill="#000"/><rect x="11" y="12" width="80" height="80" rx="10" fill="#2a2a2a"/><path d="M15 22l9 8-9 8" fill="none" stroke="#fff" stroke-width="3"/><path d="M28 38h10" stroke="#fff" stroke-width="3"/></svg><i class="dot dot-brown"></i></div>
  <div class="dk"><svg class="dk-i" viewBox="0 0 102 103"><rect width="102" height="103" rx="22" fill="#fff"/><path d="M70 14L86 22v58L70 90 34 56 20 66l-6-5 15-11-15-12 6-5 14 11z" fill="#3b85d4"/><path d="M70 14L34 49l-14-11-6 5 15 10-15 11 6 5 14-11 36 34 0-24-20-19 20-18z" fill="#2968ad"/><path d="M70 14l16 8v58l-16 10z" fill="#3f97ea"/></svg><i class="dot dot-brown"></i></div>
  <div class="dk"><svg class="dk-i" viewBox="0 0 102 103"><rect width="102" height="103" rx="22" fill="#fff8f4"/><circle cx="51" cy="51" r="44" fill="#57a257"/><path d="M13 29A44 44 0 0 1 89 29H51z" fill="#d85243"/><path d="M89 29A44 44 0 0 1 51 95l18-32 20-34z" fill="#f3bc45"/><circle cx="51" cy="51" r="21" fill="#fff"/><circle cx="51" cy="51" r="17" fill="#4b7fe0"/></svg><i class="dot dot-brown"></i></div>
  <i class="dk-sep dk-sep-1"></i>
  <div class="dk"><svg class="dk-i" viewBox="0 0 102 103"><rect x="30" y="8" width="72" height="90" rx="14" fill="#fff"/><defs><linearGradient id="ke" x1="0" y1="0" x2="0" y2="1"><stop offset="0" stop-color="#5ba8f8"/><stop offset="1" stop-color="#2e6ad8"/></linearGradient></defs><rect width="98" height="103" rx="22" fill="url(#ke)"/><path d="M65 41c-4 0-7-2-11-2-7 0-14 6-14 17 0 12 7 26 13 26 3 0 5-2 9-2s6 2 9 2c5 0 10-9 12-15-8-4-8-17 0-22-3-3-7-5-11-4zM54 37c-1-7 5-12 10-13 1 6-4 13-10 13z" fill="#fff" transform="translate(-8 -2)"/></svg><i class="dot dot-brown"></i></div>
  <div class="dk"><svg class="dk-i" viewBox="0 0 102 103"><defs><linearGradient id="mu" x1="0" y1="0" x2="0" y2="1"><stop offset="0" stop-color="#ee6878"/><stop offset="1" stop-color="#e53b40"/></linearGradient></defs><rect width="102" height="103" rx="22" fill="url(#mu)"/><path d="M36 30l36-9v50c0 8-14 11-14 1 0-6 6-7 10-8V34l-26 7v40c0 9-15 11-15 1 0-6 7-7 9-8z" fill="#fff"/></svg><i class="dot dot-brown"></i></div>
  <div class="dk"><svg class="dk-i" viewBox="0 0 102 103"><rect width="102" height="103" rx="22" fill="#fff"/><g fill="none" stroke-linecap="round" stroke-width="12"><path d="M58 20v29" stroke="#5eb487"/><path d="M85 44v5" stroke="#5eb487"/><path d="M44 19v0" stroke="#6ac4e8"/><path d="M22 42h22" stroke="#6ac4e8"/><path d="M44 61v29" stroke="#d02f5f"/><path d="M17 61v5" stroke="#d02f5f"/><path d="M58 61h27" stroke="#e5b54a"/><path d="M58 87v0" stroke="#e5b54a"/></g></svg><i class="dot dot-brown"></i></div>
  <div class="dk"><svg class="dk-i" viewBox="0 0 102 103"><clipPath id="te"><rect width="102" height="103" rx="16"/></clipPath><g clip-path="url(#te)"><rect width="102" height="103" fill="#fff"/><path d="M0 24h102M0 46h102M0 68h102M0 92h102" stroke="#cfcfcf" stroke-width="2.500"/><path d="M17 0v103" stroke="#f0c0c0"/></g><path d="M91 -11L86 -11 L 39 104 L 39 109 L 43 105 L 95 -8z" fill="#a9c5dd" stroke="#6d8fac" stroke-width="1"/></svg><i class="dot dot-brown"></i></div>
  <div class="dk"><svg class="dk-i" viewBox="0 0 102 103"><clipPath id="pv"><rect x="8" y="7" width="86" height="89" rx="10"/></clipPath><rect width="102" height="103" rx="18" fill="#f2f2f2"/><g clip-path="url(#pv)"><rect x="8" y="7" width="86" height="89" fill="#a8bce6"/><path d="M8 58h86v38H8z" fill="#3b6c97"/><path d="M8 78l20-6 20 10 10 14H8z" fill="#e6eef2"/><path d="M8 82l14-6 8 6-6 8z" fill="#5a4a3c"/></g><path d="M52 52c0-3 42-3 42 0v18c0 3-42 3-42 0z" fill="#111"/><path d="M55 70h36l11 32c0 6-58 6-58 0z" fill="#e8e8e8" stroke="#444" stroke-width="1.500"/><path d="M60 82l8-6 6 14H58zM78 78l8 14H72z" fill="#7b8790"/></svg><i class="dot dot-brown"></i></div>
  <div class="dk"><svg class="dk-i" viewBox="0 0 102 103"><defs><linearGradient id="ij" x1="0" y1="1" x2="1" y2="0"><stop offset="0" stop-color="#c645b0"/><stop offset="1" stop-color="#f03e70"/></linearGradient></defs><rect width="102" height="103" rx="22" fill="url(#ij)"/><path d="M102 50L40 103h40a22 22 0 0 0 22-22z" fill="#3a7bf0"/><path d="M70 0h10a22 22 0 0 1 22 22v20z" fill="#5d5bd0"/><rect x="16" y="17" width="70" height="70" fill="#000"/><text x="24" y="50" class="ij">IJ</text><path d="M24 76h26" stroke="#fff" stroke-width="5"/></svg><i class="dot dot-brown"></i></div>
  <i class="dk-sep dk-sep-2"></i>
  <div class="dk"><svg class="dk-i" viewBox="0 0 102 103"><defs><linearGradient id="tr" x1="0" y1="0" x2="1" y2="0"><stop offset="0" stop-color="#c4c8cc"/><stop offset=".5" stop-color="#eeeeee"/><stop offset="1" stop-color="#c4c6ca"/></linearGradient></defs><path d="M6 10h90l-8 92c-1 7-73 7-74 0z" fill="url(#tr)"/><path d="M6 10c2-10 20-13 45-13s43 3 45 13c-10 14-80 14-90 0z" fill="#8f959b"/><path d="M18 10l12-20 10 24M45 12L55-10l12 24M68 12l10-18 8 18" fill="#f4f4f4"/></svg></div>
</div>
</body>
</html>
```

FILE: styles.css
```css
* { box-sizing: border-box; }
html, body { margin: 0; padding: 0; }
body {
  width: 3456px; height: 2234px; overflow: hidden; position: relative;
  display: flex; flex-direction: column;
  font-family: "Noto Sans", "Open Sans", sans-serif;
  background: linear-gradient(90deg, #32619a 0, #3a6a9f 21%, #c07432 21.3%, #b7512b 55%, #bf6a32 100%);
}
.defs { position: absolute; }
button { font-family: inherit; }
ul { list-style: none; margin: 0; padding: 0; }
a { text-decoration: none; }

/* mac menu bar */
.menubar {
  height: 76px; flex: none; display: flex; justify-content: space-between; align-items: flex-start;
  padding: 16px 32px 0 41px;
  background: linear-gradient(90deg, #b8dbe2 0, #c7dcd2 18%, #dfe0b4 38%, #e8dea6 50%, #d6d3ae 62%, #bcc6bc 78%, #a3bdd5 100%);
  border-bottom: 2px solid;
  border-image: linear-gradient(90deg, #3f7295 0, #3f7295 26%, #94793f 26.100%, #94793f 76%, #3f6f9f 80%) 1;
  font-family: Inter, sans-serif; font-size: 26px; color: #111;
}
.menu-left { display: flex; align-items: center; height: 42px; gap: 42px; }
.apple { width: 28px; height: 32px; margin-right: -3px; }
.menu-item { font-weight: 400; font-size: 25px; line-height: 42px; }
strong.menu-item { font-weight: 700; font-size: 26px; }
.menu-item + .menu-item { margin-left: .5px; }
.menu-right { display: flex; align-items: center; height: 42px; gap: 36px; }
.st { width: 32px; height: 32px; }
.st-batt { width: 56px; height: 28px; }
.st-q { color: #111; }
.clock { margin-left: -2px; letter-spacing: .1px; }

/* window */
.window {
  width: 3452px; height: 1988px; flex: none; display: flex; flex-direction: column;
  border-radius: 20px 20px 0 0; overflow: hidden; background: #fff;
}
.tabstrip { height: 80px; flex: none; background: #f9dbd7; display: flex; align-items: flex-start; padding-top: 12px; }
.lights { width: 184px; height: 58px; display: flex; align-items: center; gap: 16px; padding-left: 42px; flex: none; }
.light { width: 24px; height: 24px; border-radius: 50%; }
.red { background: #ee6a5f; border: 1px solid #d9574c; }
.yellow { background: #f5bf4f; border: 1px solid #dca53c; }
.green { background: #61c554; border: 1px solid #52ad46; }
.tab { width: 116.900px; height: 68px; flex: none; display: flex; align-items: flex-start; padding: 12px 3px 0 16px; }
.fav { width: 32px; height: 32px; flex: none; }
.tab-label {
  width: 26px; margin-left: 16px; overflow: hidden; white-space: nowrap;
  font: 25px/32px Inter, sans-serif; color: #51403e;
  -webkit-mask-image: linear-gradient(90deg, #000 55%, transparent 100%);
  mask-image: linear-gradient(90deg, #000 55%, transparent 100%);
}
.tab-sep { width: 4px; height: 32px; margin-left: auto; background: #f4b6ac; border-radius: 2px; }
.tab-active { width: 104px; margin-right: 12.900px; background: #fff8f5; border-radius: 20px 20px 0 0; position: relative; }
.tab-active::before, .tab-active::after { content: ""; position: absolute; bottom: 0; width: 20px; height: 20px; }
.tab-active::before { left: -20px; background: radial-gradient(circle at 0 0, #f9dbd7 20px, #fff8f5 20.500px); }
.tab-active::after { right: -20px; background: radial-gradient(circle at 100% 0, #f9dbd7 20px, #fff8f5 20.500px); }
.tab-close { margin-left: 15px; font: 700 26px/32px "DejaVu Sans", sans-serif; color: #1d1a1a; }
.tab-plus { width: 24px; height: 24px; margin: 16px 0 0 13px; flex: none; }
.tab-chev { width: 57px; height: 56px; margin: 0 0 0 126px; border-radius: 22px; background: #fcefec; display: flex; align-items: center; justify-content: center; flex: none; }

.toolbar { height: 94px; flex: none; background: #fff8f5; border-bottom: 2px solid #f9dbd7; display: flex; align-items: center; padding-left: 30px; }
.tb-ico { width: 28px; height: 28px; flex: none; margin-right: 44px; }
.omni { width: 2864px; height: 68px; margin-left: -6px; flex: none; border-radius: 34px; background: #efe5e9; display: flex; align-items: center; padding: 0 32px 0 10px; }
.omni-chip { width: 48px; height: 48px; border-radius: 50%; background: #fff8f5; display: flex; align-items: center; justify-content: center; flex: none; }
.omni-url { margin-left: 16px; font: 400 28px/68px Inter, sans-serif; color: #241c1c; white-space: nowrap; flex: 1; letter-spacing: -.05px; }
.omni-star { width: 34px; height: 34px; flex: none; }
.tb-ext { width: 32px; height: 32px; margin-left: 37px; flex: none; }
.tb-sep { width: 2px; height: 36px; margin-left: 30px; background: #f9dbd7; }
.tb-dl { width: 32px; height: 32px; margin-left: 44px; flex: none; }
.avatar { width: 38px; height: 38px; margin-left: 35px; border-radius: 50%; background: #7b5cc0; color: #e8e0f5; font: 20px/38px Inter, sans-serif; text-align: center; flex: none; }
.tb-dots { width: 8px; height: 32px; margin-left: 50px; flex: none; }

/* aws bar */
.awsbar { height: 82px; flex: none; background: #252f3e; border-bottom: 2px solid #414d5c; display: flex; align-items: center; color: #fff; font-size: 24px; }
.aws-logo { width: 133px; height: 80px; padding-left: 34px; display: flex; flex-direction: column; }
.aws-word { font: 600 36px/36px "Open Sans", sans-serif; height: 32px; margin-top: 9px; letter-spacing: -1px; }
.aws-sep { width: 2px; height: 44px; background: #414d5c; }
.aws-grid { width: 32px; height: 32px; margin-left: 32px; flex: none; }
.aws-services { margin-left: 17px; width: 123px; white-space: nowrap; letter-spacing: -.4px; }
.aws-search { width: 1080px; height: 60px; flex: none; background: #16191f; border: 2px solid #879596; border-radius: 2px; display: flex; align-items: center; padding: 0 18px 0 20px; }
.aws-search-ico { width: 30px; height: 30px; color: #d5dbdb; flex: none; }
.aws-search-ph { font-style: italic; font-size: 28px; margin-left: 20px; color: #aab7b8; flex: 1; }
.aws-search-key { color: #aab7b8; font-size: 28px; }
.aws-right { display: flex; align-items: center; margin-left: 1253px; height: 80px; }
.aws-ic { width: 100px; height: 46px; display: flex; align-items: center; justify-content: center; border-right: 2px solid #414d5c; flex: none; }
.aws-menu { display: flex; align-items: center; white-space: nowrap; height: 46px; }
.aws-region { width: 217px; padding-left: 35px; border-right: 2px solid #414d5c; }
.aws-user { padding-left: 34px; }
.caret { display: inline-block; width: 0; height: 0; border-left: 8px solid transparent; border-right: 8px solid transparent; border-top: 12px solid #fff; margin-left: 10px; }
.caret-dark { border-left-width: 10px; border-right-width: 10px; border-top: 15px solid #545b64; margin-left: 18px; }

/* layout */
.main { height: 1668px; flex: none; display: flex; background: #f2f3f3; overflow: hidden; }
.side { width: 562px; flex: none; background: #fff; border-right: 2px solid #d5dbdb; color: #545b64; font-size: 27px; }
.side-head { height: 125px; border-bottom: 2px solid #eaeded; display: flex; align-items: center; justify-content: space-between; padding: 0 42px 0 64px; }
.side-title { font-size: 35px; font-weight: 700; color: #16191f; letter-spacing: -.4px; }
.side-close { width: 28px; height: 28px; }
.side-first { margin-top: 33px; }
.side-link { height: 60px; line-height: 60px; padding-left: 64px; white-space: nowrap; }
.side-active { color: #2c70bd; font-weight: 700; font-size: 26px; }
.side-hr { border: 0; height: 2px; margin: 0 40px; background: #eaeded; }
.side-hr-1 { margin-top: 31px; }
.side-block { margin: 59px 40px 0 64px; line-height: 44px; }
.side-group { margin-top: 39px; height: 44px; line-height: 44px; display: flex; align-items: center; font-weight: 700; font-size: 26px; padding-left: 26px; }
.side-sub { margin-top: 11px; }
.tri-down { width: 0; height: 0; border-left: 10px solid transparent; border-right: 10px solid transparent; border-top: 14px solid #545b64; margin-right: 16px; }
.tri-right { width: 0; height: 0; border-top: 10px solid transparent; border-bottom: 10px solid transparent; border-left: 16px solid #879596; margin: 0 18px 0 28px; }
.side-hr-2 { margin-top: 39px; }
.side-feature { margin-top: 50px; padding-left: 64px; height: 42px; display: flex; align-items: center; }
.badge { width: 46px; height: 42px; margin-left: 16px; border-radius: 21px; background: #2e70b9; color: #fff; font-weight: 600; font-size: 24px; display: flex; align-items: center; justify-content: center; }
.side-hr-3 { margin-top: 49px; }
.side-market { margin-top: 49px; height: 44px; display: flex; align-items: center; letter-spacing: .2px; }
.side-market .tri-right { margin-left: 28px; }

.content { flex: 1; min-width: 0; padding: 45px 80px 0 78px; font-size: 27px; color: #16191f; overflow: hidden; }
.link { color: #2e70b8; text-decoration: underline; text-decoration-thickness: 2px; text-underline-offset: 5px; }
.crumbs { display: flex; align-items: center; height: 36px; white-space: nowrap; letter-spacing: .1px; }
.crumb-ch { width: 16px; height: 26px; margin: 0 24px; }
.crumb-cur { color: #545b64; font-weight: 700; }
.page-head { display: flex; justify-content: space-between; align-items: center; margin-top: 52px; height: 63px; }
.page-title { margin: 0; font-size: 56px; font-weight: 400; color: #16191f; line-height: 63px; position: relative; top: -4px; letter-spacing: -.1px; }
.btn { display: inline-flex; align-items: center; justify-content: center; height: 63px; border: 2px solid #545b64; border-radius: 3px; background: #fff; color: #545b64; font-size: 28px; font-weight: 700; padding: 0; white-space: nowrap; letter-spacing: -.3px; flex: none; }
.btn-top { width: 288px; }
.btn-ico { width: 28px; height: 30px; margin-right: 15px; flex: none; }
.btn-ico-r { margin: 0 0 0 15px; }
.tabs { margin: 46px 0 0; height: 115px; border-bottom: 2px solid #aab7b8; display: flex; align-items: center; font-weight: 700; font-size: 27px; color: #545b64; padding-left: 4px; }
.ctab { width: 180px; height: 115px; line-height: 117px; text-align: center; letter-spacing: -.2px; }
.ctab-on { color: #2c70bd; border-bottom: 4px solid #2c70bd; width: 178px; height: 115px; margin-bottom: -2px; }
.ctab-sep { width: 2px; height: 60px; background: #aab7b8; }
.ctab:last-child { width: 220px; }

/* card */
.card { margin-top: 64px; background: #fff; box-shadow: 0 1px 3px rgba(0,28,36,.25); border-radius: 2px; }
.card-top { display: flex; justify-content: space-between; padding: 33px 40px 0; background: #fafafa; }
.card-h { display: flex; align-items: baseline; padding-top: 7px; white-space: nowrap; }
.card-name { font-size: 35px; font-weight: 700; letter-spacing: -.6px; }
.card-count { font-size: 36px; color: #687078; margin-left: 10px; letter-spacing: -.3px; }
.card-info { font-size: 22px; font-weight: 700; color: #2e70b8; margin-left: 18px; letter-spacing: -.3px; }
.card-btns { display: flex; gap: 17px; }
.btn-off { border-color: #d5dbdb; color: #aab7b8; background: #fafafa; }
.btn-refresh { width: 99px; }
.b-uri { width: 288px; }
.b-url { width: 255px; }
.b-dl { width: 260px; }
.b-open { width: 198px; }
.b-del { width: 172px; margin-left: -1px; }
.b-act { width: 225px; margin-left: -1px; }
.b-new { width: 262px; }
.b-up { width: 222px; background: #f2a03a; border-color: #f2a03a; color: #16191f; }
.card-desc { margin: 0; padding: 8px 40px 0; height: 44px; line-height: 36px; font-size: 24px; letter-spacing: -.34px; color: #545b64; white-space: nowrap; background: #fafafa; }
.link-s { text-underline-offset: 4px; }
.ext { width: 30px; height: 30px; margin-left: 6px; color: #2e70b8; vertical-align: -6px; }
.card-filter { background: #fafafa; padding: 29px 40px 32px; display: flex; justify-content: space-between; }
.finder { width: 737px; height: 64px; border: 2px solid #687078; border-radius: 3px; background: #fff; display: flex; align-items: center; padding-left: 15px; }
.finder-ico { width: 30px; height: 30px; color: #687078; }
.finder-ph { margin-left: 18px; font-style: italic; color: #687078; font-size: 28px; }
.pager { display: flex; align-items: center; height: 64px; padding-right: 10px; }
.pg-ch { width: 14px; height: 30px; }
.pg-num { width: 96px; text-align: center; font-size: 25px; }
.pg-sep { width: 2px; height: 64px; margin-left: 31px; background: #eaeded; }
.pg-gear { width: 30px; height: 32px; margin-left: 28px; color: #545b64; }

/* table */
.grid-head, .row { display: grid; grid-template-columns: 106px 510px 508px 509px 509px 510px; }
.grid-head { height: 81px; background: #fafafa; border-top: 2px solid #eaeded; border-bottom: 3px solid #eaeded; align-items: center; }
.cell-chk { padding-left: 40px; display: flex; align-items: center; }
.grid-head .cell-chk { border-right: 2px solid #eaeded; height: 40px; }
.chk { width: 28px; height: 28px; border: 2px solid #687078; border-radius: 4px; background: #fff; display: block; }
.th { height: 40px; display: flex; align-items: center; justify-content: space-between; padding: 0 26px 0 41px; border-right: 2px solid #aab7b8; font-weight: 700; font-size: 27px; letter-spacing: -.3px; color: #545b64; white-space: nowrap; }
.th-name { padding-left: 43px; padding-right: 28px; }
.th-dark { color: #16191f; }
.th-last { border-right: 0; padding-right: 30px; }
.flt { width: 20px; height: 18px; color: #545b64; }
.sort-up { width: 0; height: 0; border-left: 10px solid transparent; border-right: 10px solid transparent; border-bottom: 16px solid #16191f; }
.row { height: 152px; padding-top: 2px; background: #fff; border-bottom: 2px solid #eaeded; align-items: center; line-height: 44px; }
.row-short { height: 108px; }
.td { padding-left: 41px; white-space: nowrap; }
.td-date { letter-spacing: .7px; }
.td-name { padding-left: 43px; }
.td-size { text-align: right; padding-right: 39px; }
.ln { letter-spacing: .9px; }
.ln ~ .ln { letter-spacing: .6px; }
.file { width: 24px; height: 30px; margin-right: 23px; vertical-align: -3px; }

.rail { width: 80px; flex: none; background: #fff; border-left: 2px solid #d5dbdb; }
.rail-cell { height: 81px; display: flex; align-items: center; justify-content: center; border-bottom: 2px solid #eaeded; }
.rail-cell:last-child { border-bottom: 0; }

.foot { height: 64px; flex: none; background: #252f3e; border-top: 2px solid #414d5c; border-bottom: 2px solid #16191f; display: flex; justify-content: space-between; align-items: center; color: #fff; font-size: 24px; padding: 0 32px; letter-spacing: -.3px; }
.foot-left { display: flex; align-items: center; }
.foot-cs { margin-left: 12px; }
.foot-fb { margin-left: 50px; }
.foot-right { display: flex; gap: 49px; }
.foot-copy { margin-right: 10px; }

/* dock */
.dock {
  position: absolute; left: 369px; top: 2067px; width: 2717px; height: 156px; border-radius: 40px;
  display: flex; align-items: flex-start; padding: 21px 22px 0; gap: 34px;
  background: linear-gradient(90deg, #6d99ce 0, #72a0d9 8%, #9a9bb0 10%, #d9935f 15%, #ef9f58 30%, #f5955a 60%, #f28b58 72%, #f09956 100%);
  box-shadow: inset 0 0 0 2px rgba(255,255,255,.18);
}
.dk { width: 102px; flex: none; display: flex; flex-direction: column; align-items: center; position: relative; }
.dk-i { width: 102px; height: 103px; display: block; overflow: visible; }
.dot { width: 6px; height: 6px; border-radius: 50%; margin-top: 25px; background: #7a2a10; }
.dot-blue { background: #123f80; }
.dot-dark { background: #4a2a20; }
.dot-brown { background: #7a2208; }
.dk-sep { width: 2px; height: 118px; background: rgba(120,60,30,.6); flex: none; }
.dk-sep-1 { margin: -2px 10px 0 16px; }
.dk-sep-2 { margin: -2px 12px 0 14px; }
.dk-badge { position: absolute; top: -13px; right: -16px; width: 48px; height: 48px; border-radius: 50%; background: #e8503f; color: #fff; font: 24px/48px Inter, sans-serif; text-align: center; }
.cal-m { font: 600 21px Inter, sans-serif; fill: #fff; }
.cal-d { font: 300 62px Inter, sans-serif; fill: #222; }
.ij { font: 700 34px "Liberation Mono", monospace; fill: #fff; }
```
